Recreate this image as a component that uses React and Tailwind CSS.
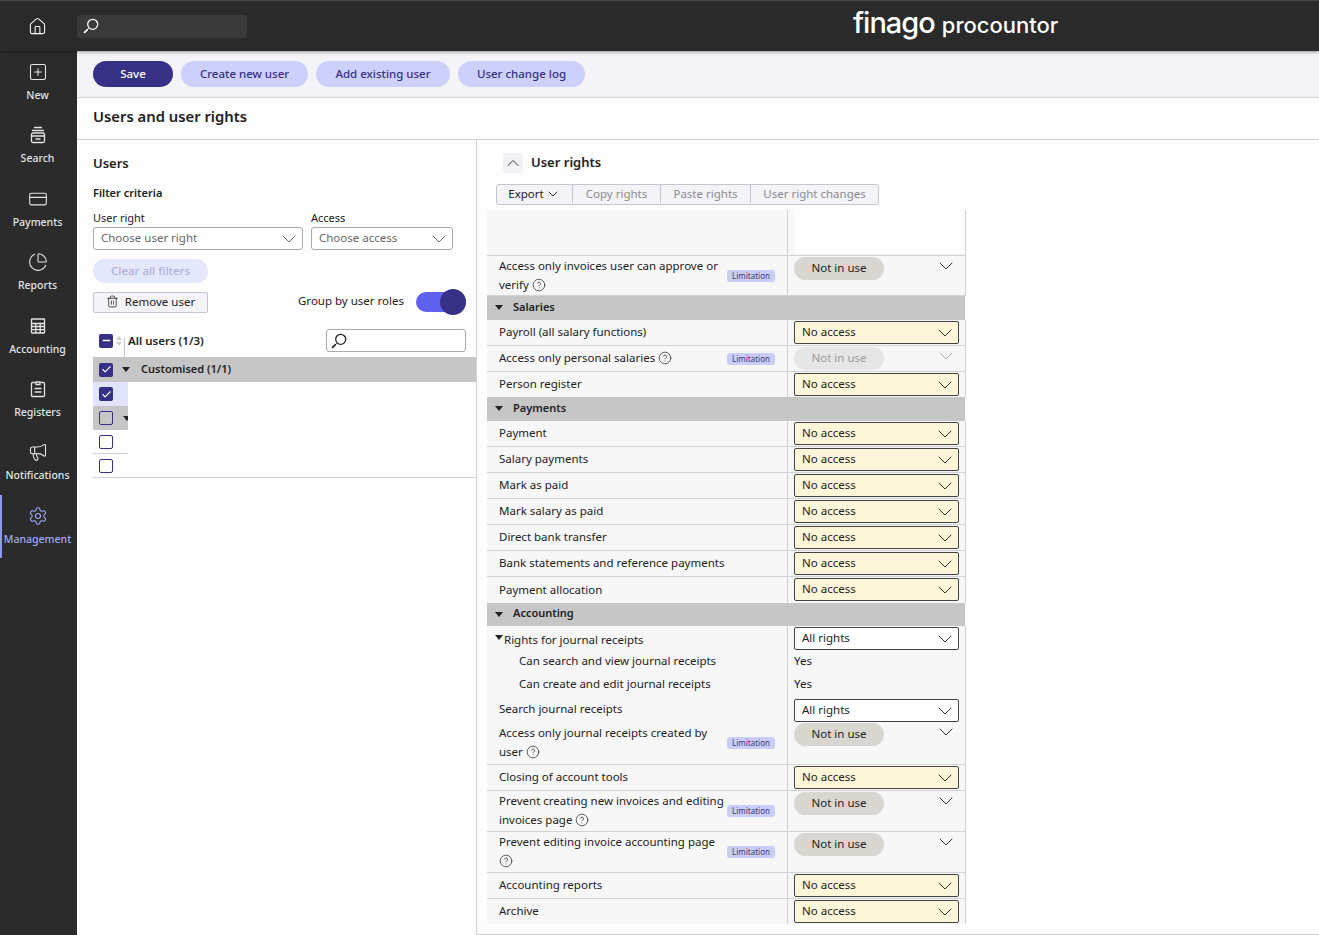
import React from "react";
import {
  Check,
  ChevronDown,
  ChevronUp,
  CircleHelp,
  CreditCard,
  House,
  Megaphone,
  Minus,
  PieChart,
  Settings,
  SquarePlus,
  Trash2,
} from "lucide-react";

const Magnifier = ({ className = "" }) => (
  <svg viewBox="0 0 16 16" className={`w-4 h-4 shrink-0 ${className}`} fill="none" stroke="currentColor">
    <circle cx="9.7" cy="6.3" r="5" strokeWidth="1.3" />
    <path d="M5.8 10.2 4.6 11.4" strokeWidth="0.8" />
    <path d="M4.4 11.6 1.6 14.4" strokeWidth="1.7" strokeLinecap="round" />
  </svg>
);

const SearchNav = ({ size, strokeWidth }) => (
  <svg width={size} height={size} viewBox="0 0 20 20" fill="none" stroke="currentColor" strokeWidth={strokeWidth} strokeLinecap="round">
    <path d="M6.5 2.5h7M4.5 5.5h11" />
    <rect x="3.5" y="8" width="13" height="9.5" rx="1.5" />
    <path d="M3.5 11h13M8 14h4" />
  </svg>
);

const CalcNav = ({ size, strokeWidth }) => (
  <svg width={size} height={size} viewBox="0 0 20 20" fill="none" stroke="currentColor" strokeWidth={strokeWidth}>
    <rect x="3.5" y="3" width="13" height="14" rx="0.5" />
    <path d="M3.5 7.5h13M3.5 10.5h13M3.5 13.7h13M7.8 7.5V17M12.2 7.5V17" />
  </svg>
);

const RegistersNav = ({ size, strokeWidth }) => (
  <svg width={size} height={size} viewBox="0 0 20 20" fill="none" stroke="currentColor" strokeWidth={strokeWidth} strokeLinecap="round">
    <path d="M7 3.5H4.5a1 1 0 0 0-1 1v12a1 1 0 0 0 1 1h11a1 1 0 0 0 1-1v-12a1 1 0 0 0-1-1H13" />
    <path d="M8 3h4v2.5H8zM7 9.5h6M7 13h6" />
  </svg>
);

const navItems = [
  { label: "New", icon: SquarePlus },
  { label: "Search", icon: SearchNav },
  { label: "Payments", icon: CreditCard },
  { label: "Reports", icon: PieChart },
  { label: "Accounting", icon: CalcNav },
  { label: "Registers", icon: RegistersNav },
  { label: "Notifications", icon: Megaphone },
  { label: "Management", icon: Settings, active: true },
];

const Sidebar = () => (
  <aside className="w-[77px] shrink-0 bg-[#2b2b2b]">
    {navItems.map((item) => {
      const Icon = item.icon;
      return (
        <div
          key={item.label}
          className={`h-[63.4px] flex flex-col items-center pt-[11px] ${
            item.active
              ? "border-l-2 border-[#8f97f5] text-[#a3a9f7] pr-[4px]"
              : "text-[#e4e4e4] pr-[2px]"
          }`}
        >
          <Icon size={20} strokeWidth={1.3} />
          <span className="text-[10.5px] leading-4 mt-[5px] font-medium">{item.label}</span>
        </div>
      );
    })}
  </aside>
);

const CheckBox = ({ state }) => {
  if (state === "checked" || state === "mixed") {
    return (
      <span className="w-[14px] h-[14px] shrink-0 rounded-[2px] bg-[#363087] flex items-center justify-center text-white">
        {state === "checked" ? <Check size={11} strokeWidth={2.5} /> : <Minus size={11} strokeWidth={3} />}
      </span>
    );
  }
  return <span className="block w-[14px] h-[14px] shrink-0 rounded-[2px] border border-[#363087]" />;
};

const Caret = ({ className = "" }) => (
  <span className={`w-0 h-0 shrink-0 border-x-[4px] border-x-transparent border-t-[5px] border-t-[#222] ${className}`} />
);

const Help = () => <CircleHelp size={14} strokeWidth={1.2} className="inline-block align-[-3px]" />;

const Select = ({ value, tone = "yellow" }) => (
  <div
    className={`w-[165px] h-[23px] rounded-[2px] border border-[#444] flex items-center justify-between pl-[7px] pr-[1px] pb-[2px] ${
      tone === "yellow" ? "bg-[#fdf6d8]" : "bg-white"
    }`}
  >
    <span>{value}</span>
    <ChevronDown size={24} strokeWidth={1} className="shrink-0 mt-[2px] text-[#333]" />
  </div>
);

const NotInUse = ({ dim }) => (
  <div className={`w-[165px] flex justify-between pr-[1px] ${dim ? "text-[#9a9a9a]" : ""}`}>
    <span className={`w-[90px] h-[23px] pb-[2px] rounded-full flex items-center justify-center ${dim ? "bg-[#e6e6e6]" : "bg-[#d9d6d2]"}`}>
      Not in use
    </span>
    <ChevronDown size={24} strokeWidth={1} className={dim ? "text-[#aaa] -mt-[3px]" : "text-[#333] -mt-[3px]"} />
  </div>
);

const Badge = () => (
  <span className="w-[48px] h-[12px] mt-[2px] rounded-[3px] bg-[#c9cdfb] text-[#3b3b6b] text-[8px] leading-[12px] text-center shrink-0">
    Limitation
  </span>
);

const Right = ({ label, h = 26, help, limit, value, tone, notInUse, dim, border = true, wrap, pt = 1 }) => (
  <div className={`flex bg-[#f7f7f7] ${border ? "border-b border-[#d2d2d2]" : ""}`} style={{ height: h }}>
    <div className="w-[301px] shrink-0 border-r border-[#d2d2d2] pl-3 pr-3 pb-[2px] flex items-center justify-between">
      <span className={`leading-[19px] ${wrap ? "w-[228px]" : ""}`}>
        {label}
        {help && (
          <>
            {" "}
            <Help />
          </>
        )}
      </span>
      {limit && <Badge />}
    </div>
    <div className="flex-1 pl-[6px] border-r border-[#d2d2d2]" style={{ paddingTop: pt }}>
      {notInUse ? <NotInUse dim={dim} /> : <Select value={value} tone={tone} />}
    </div>
  </div>
);

const Group = ({ label, h = 24 }) => (
  <div className="bg-[#c6c6c6] mr-[1px] flex items-center text-[11px] font-semibold pl-2 pb-[2px] gap-[10px]" style={{ height: h }}>
    <Caret className="mt-[1px]" />
    <span>{label}</span>
  </div>
);

const SubRow = ({ label, yes }) => (
  <div className="h-[23px] flex bg-[#f7f7f7]">
    <div className="w-[301px] shrink-0 border-r border-[#d2d2d2] pl-8 pb-[2px] flex items-center">{label}</div>
    <div className="flex-1 pl-[6px] pb-[2px] flex items-center border-r border-[#d2d2d2]">{yes}</div>
  </div>
);

const UsersPanel = () => (
  <section className="w-[400px] shrink-0 border-r border-[#d2d2d2] pl-4 pr-[10px]">
    <h2 className="text-[13px] font-semibold leading-5 mt-[13px]">Users</h2>
    <h3 className="text-[11px] font-semibold leading-4 mt-[12px]">Filter criteria</h3>
    <div className="flex gap-2 mt-[10px]">
      <label className="w-[210px]">
        <div className="text-[11px] leading-[14px] mb-[2px]">User right</div>
        <div className="h-[23px] rounded-[3px] border border-[#a9a9a9] bg-white text-[#666] flex items-center justify-between pl-[7px] pr-[1px]">
          <span className="-mt-[2px]">Choose user right</span>
          <ChevronDown size={24} strokeWidth={1} className="shrink-0" />
        </div>
      </label>
      <label className="w-[142px]">
        <div className="text-[11px] leading-[14px] mb-[2px]">Access</div>
        <div className="h-[23px] rounded-[3px] border border-[#a9a9a9] bg-white text-[#666] flex items-center justify-between pl-[7px] pr-[1px]">
          <span className="-mt-[2px]">Choose access</span>
          <ChevronDown size={24} strokeWidth={1} className="shrink-0" />
        </div>
      </label>
    </div>
    <button className="mt-[9px] block w-[115px] h-[24px] rounded-full bg-[#e5e7fd] text-[#aeb0da] font-medium">
      Clear all filters
    </button>
    <div className="flex items-center mt-[7px] h-[24px]">
      <button className="w-[115px] h-[21px] pb-[1px] border border-[#c6c6d2] bg-[#f4f4f8] rounded-[2px] flex items-center justify-center gap-[6px]">
        <Trash2 size={13} strokeWidth={1.4} /> Remove user
      </button>
      <span className="ml-auto mr-[12px] -mt-[2px]">Group by user roles</span>
      <span className="relative w-[50px] h-[20px] rounded-full bg-[#5f61f0]">
        <span className="absolute right-0 -top-[3px] w-[26px] h-[26px] rounded-full bg-[#363087]" />
      </span>
    </div>
    <div className="flex items-center h-[23px] mt-[15px] pl-[6px]">
      <CheckBox state="mixed" />
      <svg viewBox="0 0 6 10" className="w-[6px] h-[10px] ml-[3px] shrink-0 text-[#cfcfcf]" fill="currentColor">
        <path d="M3 0 6 4H0zM3 10 0 6h6z" />
      </svg>
      <span className="self-start mt-[9px] ml-[2px] h-[19px] w-px bg-[#c6c6c6] shrink-0" />
      <span className="ml-[3px] font-semibold">All users (1/3)</span>
      <div className="ml-auto w-[140px] h-[23px] rounded-[3px] border border-[#a9a9a9] bg-white flex items-center pl-[4px] text-[#222]">
        <Magnifier />
      </div>
    </div>
    <div className="-mr-[10px] mt-[5px] h-[25px] bg-[#c6c6c6] flex items-center pl-[6px]">
      <CheckBox state="checked" />
      <Caret className="ml-[9px]" />
      <span className="ml-[11px] text-[11px] font-semibold">Customised (1/1)</span>
    </div>
    <div className="border-b border-[#d2d2d2] -mr-[10px]">
      <div className="w-[35px] h-[24px] bg-[#e2e3fd] flex items-center pl-[6px]">
        <CheckBox state="checked" />
      </div>
      <div className="w-[35px] h-[24px] bg-[#c6c6c6] flex items-center pl-[6px] overflow-hidden">
        <CheckBox />
        <Caret className="ml-[10px]" />
      </div>
      <div className="w-[35px] h-[24px] border-b border-[#d2d2d2] flex items-center pl-[6px]">
        <CheckBox />
      </div>
      <div className="w-[35px] h-[23px] flex items-center pl-[6px]">
        <CheckBox />
      </div>
    </div>
  </section>
);

const RightsPanel = () => (
  <section className="flex-1 pl-[10px] border-b border-[#d2d2d2]">
    <div className="flex items-center h-[20px] mt-[13px] pl-[16px] gap-[8px]">
      <span className="w-5 h-5 rounded-[3px] bg-[#f2f2f6] flex items-center justify-center">
        <ChevronUp size={20} strokeWidth={1.1} />
      </span>
      <h2 className="text-[13px] font-semibold">User rights</h2>
    </div>
    <div className="flex mt-[11px] ml-[9px] w-fit h-[21px] pb-[1px] rounded-[3px] border border-[#c6c6d2] bg-[#f4f4f8] text-[#8a8a96]">
      <span className="w-[76px] border-r border-[#c6c6d2] text-[#222] flex items-center justify-center gap-[1px]">
        Export <ChevronDown size={16} strokeWidth={1.3} />
      </span>
      <span className="w-[88px] border-r border-[#c6c6d2] flex items-center justify-center">Copy rights</span>
      <span className="w-[90px] border-r border-[#c6c6d2] flex items-center justify-center">Paste rights</span>
      <span className="w-[127px] flex items-center justify-center">User right changes</span>
    </div>
    <div className="w-[479px] mt-[5px]">
      <div className="flex h-[46px] bg-[#f7f7f7] border-b border-[#d2d2d2]">
        <div className="w-[301px] shrink-0 border-r border-[#d2d2d2]" />
        <div className="flex-1 border-r border-[#d2d2d2] pl-[6px] pb-[1px]">
          <div className="h-full bg-[#fdfdfd]" />
        </div>
      </div>
      <Right label="Access only invoices user can approve or verify" h={40} help limit notInUse wrap />
      <Group label="Salaries" />
      <Right label="Payroll (all salary functions)" value="No access" />
      <Right label="Access only personal salaries" help limit notInUse dim />
      <Right label="Person register" h={25} value="No access" border={false} />
      <Group label="Payments" />
      <Right label="Payment" value="No access" />
      <Right label="Salary payments" value="No access" />
      <Right label="Mark as paid" value="No access" />
      <Right label="Mark salary as paid" value="No access" />
      <Right label="Direct bank transfer" value="No access" />
      <Right label="Bank statements and reference payments" value="No access" />
      <Right label="Payment allocation" value="No access" border={false} />
      <Group label="Accounting" h={23} />
      <div className="flex h-[24px] bg-[#f7f7f7]">
        <div className="w-[301px] shrink-0 border-r border-[#d2d2d2] pl-2 flex items-center">
          <Caret className="mr-[1px] -mt-[2px]" />
          <span className="mt-[4px]">Rights for journal receipts</span>
        </div>
        <div className="flex-1 pl-[6px] pt-[1px] border-r border-[#d2d2d2]">
          <Select value="All rights" tone="white" />
        </div>
      </div>
      <SubRow label="Can search and view journal receipts" yes="Yes" />
      <SubRow label="Can create and edit journal receipts" yes="Yes" />
      <Right label="Search journal receipts" value="All rights" tone="white" border={false} pt={3} />
      <Right label="Access only journal receipts created by user" h={43} help limit notInUse wrap />
      <Right label="Closing of account tools" value="No access" />
      <Right label="Prevent creating new invoices and editing invoices page" h={41} help limit notInUse wrap />
      <Right label="Prevent editing invoice accounting page" h={41} help limit notInUse wrap />
      <Right label="Accounting reports" value="No access" />
      <Right label="Archive" h={25} value="No access" border={false} />
    </div>
  </section>
);

export default function App() {
  return (
    <div className="w-[1319px] h-[935px] overflow-hidden flex flex-col bg-[#fdfdfd] text-[#222] text-[11.5px] font-['Noto_Sans',sans-serif]">
      <header className="h-[51px] shrink-0 bg-[#2a2a2a] border-t border-[#444] flex items-center text-white shadow-[0_1px_3px_rgba(0,0,0,0.4)] z-10">
        <div className="w-[74px] mr-[3px] flex justify-center">
          <House size={19} strokeWidth={1.3} />
        </div>
        <div className="w-[170px] h-[23px] rounded-[3px] bg-[#3a3a3a] flex items-center pl-[6px]">
          <Magnifier />
        </div>
        <div className="ml-[606px] -mt-[7px] flex items-baseline gap-[7px] font-['Inter',sans-serif]">
          <span className="text-[29px] leading-none font-medium tracking-[-1px]">finago</span>
          <span className="text-[22px] leading-none font-medium">procountor</span>
        </div>
      </header>
      <div className="flex flex-1 min-h-0">
        <Sidebar />
        <main className="flex-1 min-w-0 flex flex-col">
          <div className="h-[47px] shrink-0 bg-[#f3f3f8] border-b border-[#d2d2d2] flex items-center pl-4 gap-2 font-medium">
            <button className="w-[80px] h-[26px] pb-[1px] rounded-full bg-[#363087] text-white">Save</button>
            <button className="w-[127px] h-[26px] pb-[1px] rounded-full bg-[#cdd0fb] text-[#363087]">Create new user</button>
            <button className="w-[134px] h-[26px] pb-[1px] rounded-full bg-[#cdd0fb] text-[#363087]">Add existing user</button>
            <button className="w-[127px] h-[26px] pb-[1px] rounded-full bg-[#cdd0fb] text-[#363087]">User change log</button>
          </div>
          <h1 className="h-[42px] shrink-0 border-b border-[#d2d2d2] pl-4 pb-1 flex items-center text-[14.8px] font-semibold">
            Users and user rights
          </h1>
          <div className="flex flex-1 min-h-0">
            <UsersPanel />
            <RightsPanel />
          </div>
        </main>
      </div>
    </div>
  );
}
